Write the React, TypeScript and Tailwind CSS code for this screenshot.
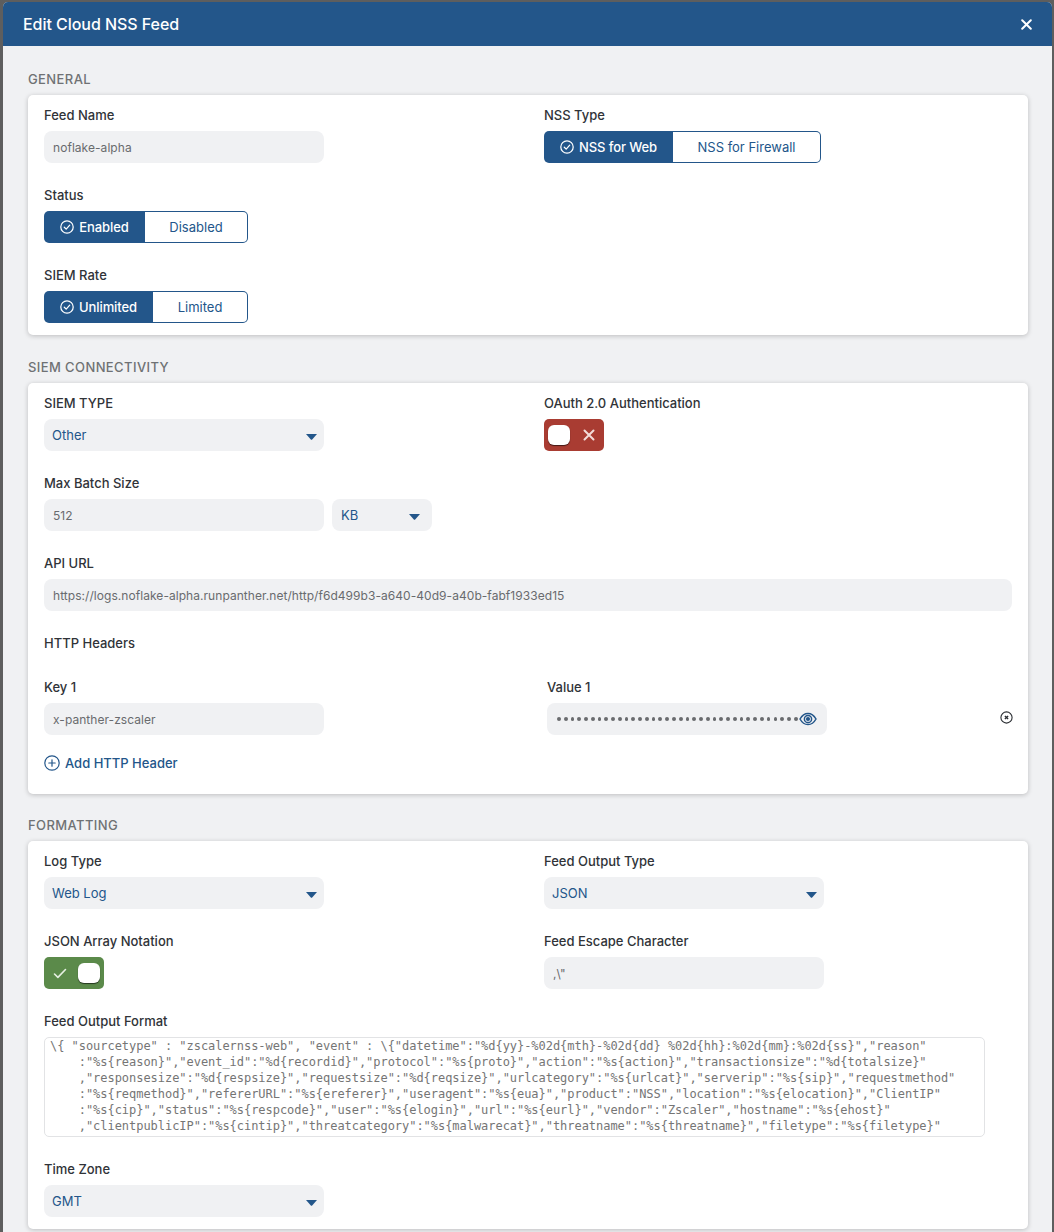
import React from "react";

const Check = ({ c = "#fff" }: { c?: string }) => (
  <svg width="14" height="14" viewBox="0 0 14 14" fill="none" stroke={c} strokeWidth="1.25" strokeLinecap="round" strokeLinejoin="round" className="shrink-0">
    <circle cx="7" cy="7" r="6.2" />
    <path d="M4.3 7.2l1.9 1.9 3.5-3.9" />
  </svg>
);

const Label = ({ children }: { children: React.ReactNode }) => (
  <div className="h-5 mb-[6px] text-[13px] leading-5 font-medium text-[#303338]">{children}</div>
);

const Section = ({ children }: { children: React.ReactNode }) => (
  <div className="h-4 leading-4 text-[13px] font-medium tracking-[0.4px] text-[#6f7174]">{children}</div>
);

const Card = ({ children, cls }: { children: React.ReactNode; cls: string }) => (
  <div className={`mt-2 bg-white rounded-[5px] pl-4 pr-4 pt-[10px] shadow-[0_1px_5px_rgba(0,0,0,0.22)] ${cls}`}>{children}</div>
);

const Input = ({ children, w = "w-[280px]" }: { children: React.ReactNode; w?: string }) => (
  <div className={`${w} h-8 rounded-lg bg-[#f0f1f3] pl-[9px] flex items-center text-[12px] tracking-[0.05px] text-[#696b6e]`}>
    <span className="mt-[2px]">{children}</span>
  </div>
);

const Select = ({ children, w = "w-[280px]", center = "pr-[7px]" }: { children: React.ReactNode; w?: string; center?: string }) => (
  <div className={`${w} h-8 rounded-lg bg-[#f0f1f3] pl-2 ${center} flex items-center justify-between text-[13px] text-[#23568a]`}>
    <span className="mt-[2px]">{children}</span>
    <svg width="11" height="6" viewBox="0 0 11 6" className="mt-[3px]">
      <path d="M0 0h11L6.4 5.3a1.2 1.2 0 0 1-1.8 0z" fill="#23568a" />
    </svg>
  </div>
);

const Seg = ({ a, b, wa, wb }: { a: string; b: string; wa: string; wb: string }) => (
  <div className="flex h-8 text-[13px] font-medium">
    <div className={`${wa} rounded-l-[5px] bg-[#23568a] text-white flex items-center justify-center gap-[5px]`}>
      <Check />
      <span className="mt-[2px] tracking-[-0.1px]">{a}</span>
    </div>
    <div className={`${wb} rounded-r-[5px] border border-l-0 border-[#23568a] bg-white text-[#23568a] flex items-center justify-center font-normal`}>
      <span className="mt-[2px]">{b}</span>
    </div>
  </div>
);

const Row = ({ children, mb = "mb-[22px]" }: { children: React.ReactNode; mb?: string }) => (
  <div className={`grid grid-cols-[500px_1fr] ${mb}`}>{children}</div>
);

const lines = [
  `\\{ "sourcetype" : "zscalernss-web", "event" : \\{"datetime":"%d{yy}-%02d{mth}-%02d{dd} %02d{hh}:%02d{mm}:%02d{ss}","reason"`,
  `    :"%s{reason}","event_id":"%d{recordid}","protocol":"%s{proto}","action":"%s{action}","transactionsize":"%d{totalsize}"`,
  `    ,"responsesize":"%d{respsize}","requestsize":"%d{reqsize}","urlcategory":"%s{urlcat}","serverip":"%s{sip}","requestmethod"`,
  `    :"%s{reqmethod}","refererURL":"%s{ereferer}","useragent":"%s{eua}","product":"NSS","location":"%s{elocation}","ClientIP"`,
  `    :"%s{cip}","status":"%s{respcode}","user":"%s{elogin}","url":"%s{eurl}","vendor":"Zscaler","hostname":"%s{ehost}"`,
  `    ,"clientpublicIP":"%s{cintip}","threatcategory":"%s{malwarecat}","threatname":"%s{threatname}","filetype":"%s{filetype}"`,
];

export default function App() {
  return (
    <div className="w-[1054px] h-[1232px] overflow-hidden bg-[#5e5e5e] pt-[2px] pl-[3px] pr-[2px] [font-family:Inter,'Liberation_Sans',sans-serif]">
      <div className="h-full rounded-t-[5px] overflow-hidden bg-[#f0f1f3]">
        <div className="h-11 bg-[#23568a] flex items-center justify-between pl-5 pr-5 text-white">
          <span className="text-[16px] font-medium tracking-[-0.05px]">Edit Cloud NSS Feed</span>
          <svg width="11" height="11" viewBox="0 0 11 11" stroke="#fff" strokeWidth="2" strokeLinecap="round">
            <path d="M1.2 1.2l8.6 8.6M9.8 1.2l-8.6 8.6" />
          </svg>
        </div>

        <div className="pl-[25px] pr-[24px] pt-[25px]">
          <Section>GENERAL</Section>
          <Card cls="h-[240px]">
            <Row>
              <div>
                <Label>Feed Name</Label>
                <Input>noflake-alpha</Input>
              </div>
              <div>
                <Label>NSS Type</Label>
                <Seg a="NSS for Web" b="NSS for Firewall" wa="w-[129px]" wb="w-[148px]" />
              </div>
            </Row>
            <Row>
              <div>
                <Label>Status</Label>
                <Seg a="Enabled" b="Disabled" wa="w-[101px]" wb="w-[103px]" />
              </div>
            </Row>
            <Row mb="mb-0">
              <div>
                <Label>SIEM Rate</Label>
                <Seg a="Unlimited" b="Limited" wa="w-[109px]" wb="w-[95px]" />
              </div>
            </Row>
          </Card>

          <div className="mt-6">
            <Section>SIEM CONNECTIVITY</Section>
          </div>
          <Card cls="h-[411px]">
            <Row>
              <div>
                <Label>SIEM TYPE</Label>
                <Select>Other</Select>
              </div>
              <div>
                <Label>OAuth 2.0 Authentication</Label>
                <div className="w-[60px] h-8 rounded-[5px] bg-[#a93c32] flex items-center pl-1 gap-[13px]">
                  <div className="w-[22px] h-5 rounded-md bg-white shadow-[0_1px_1px_rgba(0,0,0,0.6)]" />
                  <svg width="12" height="12" viewBox="0 0 12 12" stroke="#f3dcd9" strokeWidth="2" strokeLinecap="round">
                    <path d="M1.5 1.5l9 9M10.5 1.5l-9 9" />
                  </svg>
                </div>
              </div>
            </Row>
            <Row>
              <div>
                <Label>Max Batch Size</Label>
                <div className="flex gap-2">
                  <Input>512</Input>
                  <Select w="w-[100px]" center="pr-[12px]">
                    <span className="pl-[1px]">KB</span>
                  </Select>
                </div>
              </div>
            </Row>
            <div className="mb-[22px]">
              <Label>API URL</Label>
              <Input w="w-[968px]">https://logs.noflake-alpha.runpanther.net/http/f6d499b3-a640-40d9-a40b-fabf1933ed15</Input>
            </div>
            <div className="h-5 mb-6 text-[13px] leading-5 font-medium text-[#303338]">HTTP Headers</div>
            <div className="grid grid-cols-[503px_280px_1fr] mb-[18px]">
              <div>
                <Label>Key 1</Label>
                <Input>x-panther-zscaler</Input>
              </div>
              <div>
                <Label>Value 1</Label>
                <div className="h-8 rounded-lg bg-[#f0f1f3] pl-[10px] pr-[10px] flex items-center justify-between">
                  <span className="flex gap-[3.02px]">
                    {Array.from({ length: 36 }).map((_, i) => (
                      <span key={i} className="w-[3.75px] h-[3.75px] rounded-full bg-[#696b6e]" />
                    ))}
                  </span>
                  <svg width="18" height="14" viewBox="0 0 18 14" fill="none" stroke="#23568a" strokeWidth="1.5" className="-ml-2 shrink-0">
                    <path d="M1 7c2-3.6 4.8-5.6 8-5.6s6 2 8 5.6c-2 3.6-4.8 5.6-8 5.6S3 10.6 1 7z" />
                    <circle cx="9" cy="7" r="3.6" />
                    <circle cx="9" cy="7" r="1.3" fill="#23568a" />
                  </svg>
                </div>
              </div>
              <div className="flex justify-end items-center pt-[25px]">
                <svg width="13" height="13" viewBox="0 0 13 13" fill="none" stroke="#2b2e33" className="mb-[3px] -mr-[1px]">
                  <circle cx="6.5" cy="6.5" r="5.6" strokeWidth="1.1" />
                  <path d="M4.9 4.9l3.2 3.2M8.1 4.9l-3.2 3.2" strokeWidth="1.4" />
                </svg>
              </div>
            </div>
            <div className="h-5 flex items-center gap-[5px] text-[13px] font-medium text-[#23568a]">
              <svg width="16" height="16" viewBox="0 0 16 16" fill="none" stroke="#23568a" strokeWidth="1.2" strokeLinecap="round">
                <circle cx="8" cy="8" r="7.2" />
                <path d="M8 4.8v6.4M4.8 8h6.4" />
              </svg>
              <span className="mt-[2px]">Add HTTP Header</span>
            </div>
          </Card>

          <div className="mt-[23px]">
            <Section>FORMATTING</Section>
          </div>
          <Card cls="h-[388px]">
            <Row>
              <div>
                <Label>Log Type</Label>
                <Select>Web Log</Select>
              </div>
              <div>
                <Label>Feed Output Type</Label>
                <Select>JSON</Select>
              </div>
            </Row>
            <Row>
              <div>
                <Label>JSON Array Notation</Label>
                <div className="w-[60px] h-8 rounded-[5px] bg-[#5b8a4a] flex items-center justify-end pr-1 gap-[11px]">
                  <svg width="14" height="11" viewBox="0 0 14 11" fill="none" stroke="#e6efe2" strokeWidth="1.6" strokeLinecap="round" strokeLinejoin="round">
                    <path d="M1.5 6l3.4 3.4L12.5 1.5" />
                  </svg>
                  <div className="w-[22px] h-5 rounded-md bg-white shadow-[0_1px_1px_rgba(0,0,0,0.6)]" />
                </div>
              </div>
              <div>
                <Label>Feed Escape Character</Label>
                <Input>,\"</Input>
              </div>
            </Row>
            <Label>Feed Output Format</Label>
            <div className="w-[941px] h-[100px] overflow-hidden rounded-[5px] border border-[#e2e3e5] pl-[5px] mb-[22px] text-[12px] leading-4 tracking-[-0.04px] text-[#757575] whitespace-pre [font-family:'DejaVu_Sans_Mono',monospace]">
              {lines.map((l, i) => (
                <div key={i}>{l}</div>
              ))}
            </div>
            <div>
              <Label>Time Zone</Label>
              <Select>GMT</Select>
            </div>
          </Card>
        </div>
      </div>
    </div>
  );
}
